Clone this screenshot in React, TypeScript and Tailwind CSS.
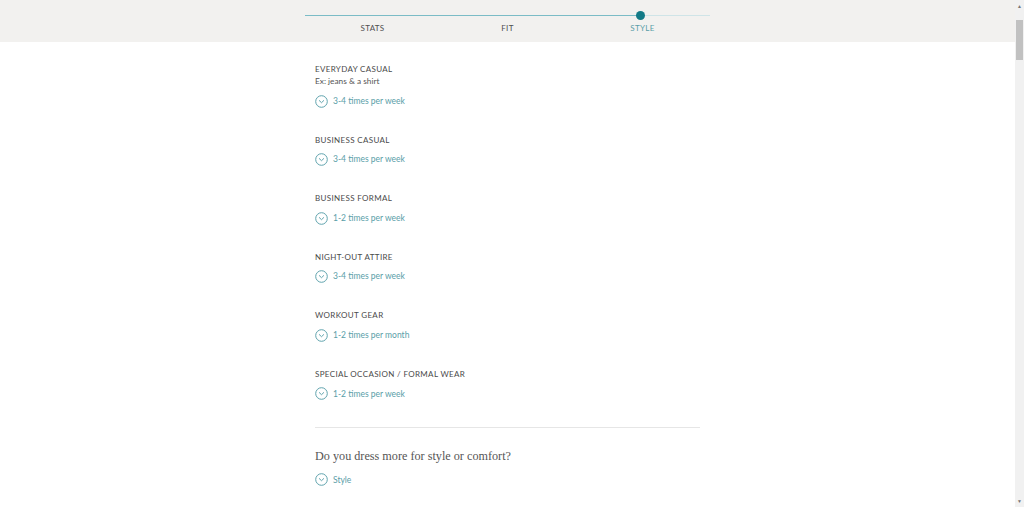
import React from 'react';

const sections = [
  { label: 'Everyday Casual', desc: 'Ex: jeans & a shirt', value: '3-4 times per week' },
  { label: 'Business Casual', value: '3-4 times per week' },
  { label: 'Business Formal', value: '1-2 times per week' },
  { label: 'Night-Out Attire', value: '3-4 times per week' },
  { label: 'Workout Gear', value: '1-2 times per month' },
  { label: 'Special Occasion / Formal Wear', value: '1-2 times per week' },
];

const ChevronCircle = () => (
  <svg width="13" height="13" viewBox="0 0 13 13" fill="none" className="shrink-0">
    <circle cx="6.5" cy="6.5" r="5.8" stroke="#5fa3ad" strokeWidth="1" />
    <path d="M4.3 5.6 L6.5 7.7 L8.7 5.6" stroke="#5fa3ad" strokeWidth="1" strokeLinecap="round" strokeLinejoin="round" />
  </svg>
);

const Option = ({ text, className = 'mt-[6px]' }: { text: string; className?: string }) => (
  <div className={`flex items-center gap-[5px] h-[16px] ${className}`}>
    <ChevronCircle />
    <span className="text-[8.5px] text-[#5a9ea8]">{text}</span>
  </div>
);

export default function App() {
  return (
    <div
      className="flex h-screen w-full overflow-hidden bg-white"
      style={{ fontFamily: 'Lato, "Open Sans", sans-serif' }}
    >
      <div className="flex-1 flex flex-col">
        {/* Progress header */}
        <div className="h-[42px] bg-[#f2f1ef] shrink-0">
          <div className="w-[405px] mx-auto pt-[15px]">
            <div className="relative h-[2px] flex">
              <div className="w-[335px] h-px bg-[#7bbcc6]" />
              <div className="flex-1 h-px bg-[#cfe4e7]" />
              <div className="absolute left-[331px] top-[-4px] w-[9px] h-[9px] rounded-full bg-[#137a86]" />
            </div>
            <div className="grid grid-cols-3 mt-[6px] text-[8px] tracking-[0.3px] uppercase leading-[10px]">
              <span className="text-center text-[#4f4f4f]">Stats</span>
              <span className="text-center text-[#4f4f4f]">Fit</span>
              <span className="text-center text-[#5a9ea8]">Style</span>
            </div>
          </div>
        </div>

        {/* Content */}
        <div className="w-[405px] mx-auto px-[10px] pt-[21px]">
          <div className="flex flex-col gap-[24.6px]">
            {sections.map((s) => (
              <div key={s.label}>
                <div className="text-[8px] leading-[12px] uppercase tracking-[0.35px] text-[#4a4a4a]">
                  {s.label}
                </div>
                {s.desc && (
                  <div className="text-[8.3px] leading-[12px] text-[#555]">{s.desc}</div>
                )}
                <Option text={s.value} />
              </div>
            ))}
          </div>

          <div className="h-px bg-[#e6e6e6] mt-[25px]" />

          <div
            className="mt-[19px] text-[12.2px] leading-[18px] text-[#555]"
            style={{ fontFamily: '"Liberation Serif", serif' }}
          >
            Do you dress more for style or comfort?
          </div>
          <Option text="Style" className="mt-[7px]" />
        </div>
      </div>

      {/* Scrollbar */}
      <div className="w-[9px] shrink-0 bg-[#f1f1f1] flex flex-col items-center">
        <div className="mt-[3px] text-[5px] leading-[6px] text-[#777]">▲</div>
        <div className="mt-[11px] w-[7px] h-[40px] bg-[#c1c1c1]" />
        <div className="flex-1" />
        <div className="mb-[3px] text-[5px] leading-[6px] text-[#777]">▼</div>
      </div>
    </div>
  );
}
